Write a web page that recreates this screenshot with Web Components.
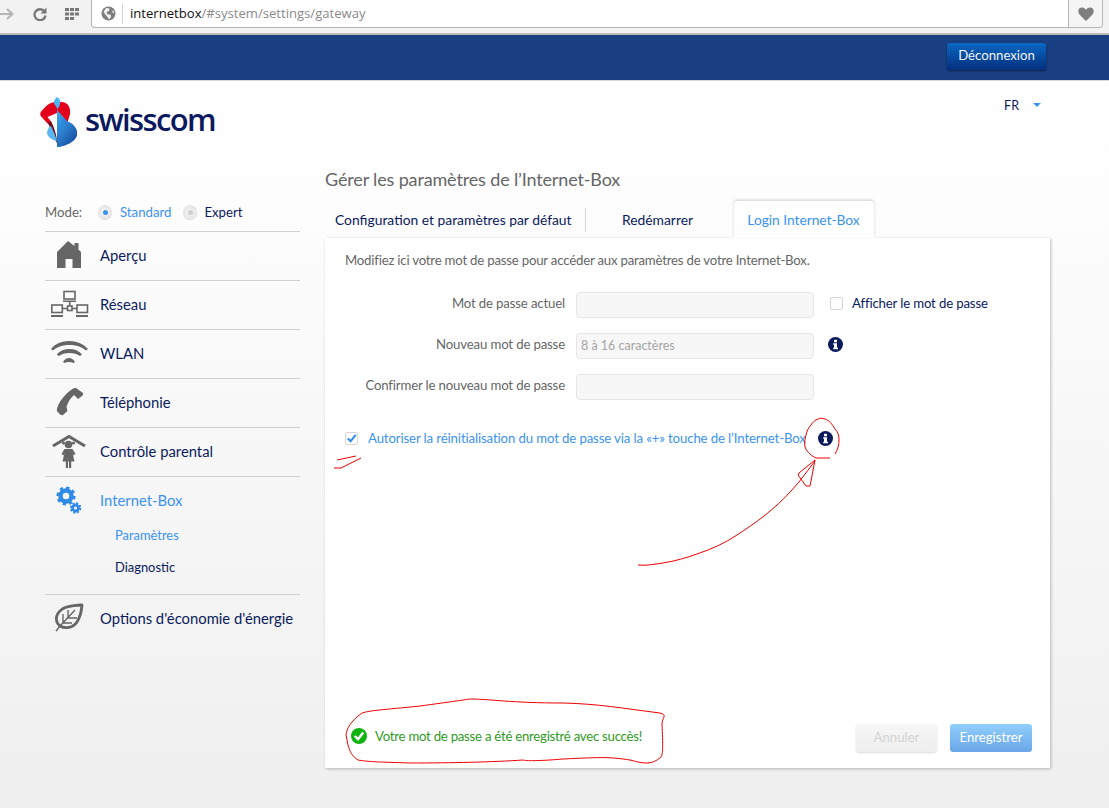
<!DOCTYPE html>
<html lang="fr">
<head>
<meta charset="utf-8">
<title>Internet-Box</title>
<style>
  html, body { margin: 0; padding: 0; }
  body {
    background: linear-gradient(#ffffff 81px, #fdfdfd 200px, #efefef 808px);
    color: #0a1a5c;
    font-family: 'Lato', 'Liberation Sans', sans-serif;
    height: 808px;
    overflow: hidden;
    position: relative;
    width: 1109px;
  }
</style>
</head>
<body>
<browser-bar></browser-bar>
<top-band></top-band>
<site-header></site-header>
<main-layout>
  <side-nav slot="side"></side-nav>
  <settings-panel slot="main"></settings-panel>
</main-layout>
<red-scribbles></red-scribbles>

<script>
const ICONS = {
  home: `<path fill="#666" d="M18 5 L7 16 V32 H15.5 V23 H22.5 V32 H31 V16 L28.5 13.5 V7 H24.5 V10 Z"/>`,
  network: `<g fill="none" stroke="#666" stroke-width="1.6">
      <rect x="14" y="6.5" width="11" height="7.5"/><rect x="1.8" y="20" width="10.5" height="7.5"/><rect x="27" y="20" width="10.5" height="7.5"/>
      <rect x="17.5" y="21" width="4.5" height="4.5"/>
      <path d="M19.7 17 V21 M12.5 23.5 H17.5 M22 23.5 H27"/>
    </g>
    <path fill="#666" d="M13 15.5 H26 V17 H13 Z M1 30 H13 V32 H1 Z M26 30 H38 V32 H26 Z"/>`,
  wifi: `<g fill="#666">
      <path d="M1 15 C9 4.3 29 4.3 38 15 L36 16.5 C28 9.2 11 9.2 3 16.500 Z"/>
      <path d="M6.7 20.5 C13 13.2 26 13.2 32 20.5 L30 22 C25 18 14 18 9 22 Z"/>
      <path d="M13 28 C16 22.7 22 22.700 25 28 L23.500 29 C21 27.700 17 27.700 14.500 29 Z"/>
    </g>`,
  phone: `<path fill="#666" d="M26 5 L33 10 C33.5 11 33 12 32 13 L28 16 L24 12 C21 15 18 18.5 16.5 24 L17.500 28 L13 32 C12 32.5 10.5 32 9.5 31 L7 28 C6.5 26 8 21 12 16 C16 10.5 21 6.5 24 5.2 C24.8 4.9 25.5 4.9 26 5 Z"/>`,
  parental: `<path fill="none" stroke="#666" stroke-width="3" d="M3 14 L19 4.5 L35 14"/>
    <g fill="#666">
      <circle cx="18.5" cy="12.5" r="3.8"/><circle cx="13.5" cy="11" r="1.6"/><circle cx="23.5" cy="11" r="1.6"/>
      <path d="M14.5 17 H22.5 L25.5 22 L23.5 23.5 L22.5 21 L24.5 29.5 H21.2 V36 H19 V29.5 H18 V36 H15.8 V29.5 H12.5 L14.5 21 L13.5 23.5 L11.5 22 Z"/>
    </g>`,
  gears: `<g fill="none" stroke="#2f8ae8">
      <circle cx="16" cy="15" r="5.5" stroke-width="4.5"/>
      <circle cx="16" cy="15" r="8.3" stroke-width="2.6" stroke-dasharray="3.3 3.2"/>
      <circle cx="25.5" cy="27" r="3" stroke-width="2.8"/>
      <circle cx="25.5" cy="27" r="4.8" stroke-width="1.8" stroke-dasharray="2.1 1.67"/>
    </g>`,
  leaf: `<g fill="none" stroke="#666">
      <path stroke-width="2.8" stroke-linejoin="round" d="M32 6 C32 6 17 6 11 11 C5 16 5 23 10 27 C15 30 23 29 27 23 C31 17 32 6 32 6 Z"/>
      <path stroke-width="1.4" d="M6 32 L10 27 L25 11 M13 24 V15 M18 19 V11 M13 24 H22 M18 19 H27"/>
    </g>`
}

class BrowserBar extends HTMLElement {
  constructor () {
    super()
    this.shadow = this.attachShadow({ mode: 'open' })
  }

  connectedCallback () {
    this.shadow.innerHTML = `
    <style>
      :host{
        background: #f2f2f2;
        border-bottom: 2px solid #bcbcbc;
        box-sizing: border-box;
        display: flex;
        height: 35px;
        padding-right: 6px;
      }
      .tools{
        align-items: center;
        display: flex;
        height: 27px;
        width: 91px;
      }
      .tools svg{ flex: none; }
      .omnibox{
        align-items: center;
        background: #fff;
        border: 1px solid #b4b4b4;
        border-top: 0;
        border-radius: 0 0 4px 4px;
        box-sizing: border-box;
        display: flex;
        flex: 1;
        height: 28px;
      }
      .globe{ margin-left: 9px; flex: none; }
      .sep{ background: #d4d4d4; height: 20px; margin: 0 8px 0 6px; width: 1px; }
      .url{ color: #8a8a8a; font: 13.1px/1 'Open Sans', sans-serif; margin-left: -1px; }
      .url b{ color: #111; font-weight: 400; }
      .fill{ flex: 1; }
      .heart{
        align-items: center;
        align-self: stretch;
        background: #f5f5f5;
        border-left: 1px solid #b4b4b4;
        border-radius: 0 0 4px 0;
        display: flex;
        justify-content: center;
        width: 33px;
      }
    </style>
    <div class="tools">
      <svg width="14" height="12" viewBox="0 0 14 12"><path d="M0 6 H12 M7 1 L12.5 6 L7 11" fill="none" stroke="#b5b5b5" stroke-width="2.2"/></svg>
      <svg width="14" height="14" viewBox="0 0 14 14" style="margin-left:19px"><path d="M11.5 4.5 A5.5 5.5 0 1 0 12.5 8.5" fill="none" stroke="#777" stroke-width="2.3"/><path d="M13.5 0.5 V6.5 H7.5 Z" fill="#777"/></svg>
      <svg width="15" height="12" viewBox="0 0 15 12" style="margin-left:18px" fill="#777">
        <rect x="0" y="0" width="4" height="3"/><rect x="5" y="0" width="4" height="3"/><rect x="10" y="0" width="4" height="3"/>
        <rect x="0" y="4.5" width="4" height="3"/><rect x="5" y="4.5" width="4" height="3"/><rect x="10" y="4.5" width="4" height="3"/>
        <rect x="0" y="9" width="4" height="3"/><rect x="5" y="9" width="4" height="3"/>
      </svg>
    </div>
    <div class="omnibox">
      <svg class="globe" width="15" height="15" viewBox="0 0 15 15"><circle cx="7.5" cy="7.5" r="7" fill="#7d7d7d"/><path d="M5 2 L8.5 2.5 L8 5 L5.5 6 L6.5 8.5 L9.5 8.5 L10 11 L8 13.5 L6.5 11 L4 8 L2.5 6 Z M11 4 L13.5 6 L12 7.5 Z" fill="#f2f2f2"/></svg>
      <span class="sep"></span>
      <span class="url"><b>internetbox</b>/#system/settings/gateway</span>
      <span class="fill"></span>
      <span class="heart"><svg width="16" height="14" viewBox="0 0 16 14"><path d="M8 14 L1.5 7.5 C-1 4.5 0.5 0.5 4 0.5 C6 0.5 7.2 1.5 8 3 C8.8 1.5 10 0.5 12 0.5 C15.5 0.5 17 4.5 14.5 7.5 Z" fill="#7f7f7f"/></svg></span>
    </div>
    `
  }
}

class TopBand extends HTMLElement {
  constructor () {
    super()
    this.shadow = this.attachShadow({ mode: 'open' })
  }

  connectedCallback () {
    this.shadow.innerHTML = `
    <style>
      :host{
        align-items: flex-start;
        background: #1a3e82;
        border-bottom: 1px solid #d8d8d8;
        box-sizing: border-box;
        display: flex;
        height: 46px;
        justify-content: flex-end;
        padding: 8px 63px 0 0;
      }
      button{
        all: unset;
        background: linear-gradient(#0a68c4, #042f7e);
        border-radius: 3px;
        box-shadow: 0 1px 2px rgba(0, 0, 0, 0.45);
        box-sizing: border-box;
        color: #f2f5fa;
        font-size: 13.2px;
        height: 27px;
        padding-bottom: 4px;
        text-align: center;
        width: 99px;
      }
    </style>
    <button>Déconnexion</button>
    `
  }
}

class SiteHeader extends HTMLElement {
  constructor () {
    super()
    this.shadow = this.attachShadow({ mode: 'open' })
  }

  connectedCallback () {
    this.shadow.innerHTML = `
    <style>
      :host{
        box-sizing: border-box;
        display: flex;
        height: 84px;
        justify-content: space-between;
        padding: 16px 68px 0 40px;
      }
      .logo{
        align-items: center;
        display: flex;
        gap: 8px;
        height: 50px;
      }
      .name{
        color: #0b1a5e;
        font: 600 31px/1 'Open Sans', sans-serif;
        letter-spacing: -1.65px;
        position: relative;
        top: -3px;
      }
      .lang{
        align-items: center;
        display: flex;
        font-size: 12.5px;
        gap: 14px;
        height: 18px;
        margin-top: -1px;
      }
      .lang i{
        border-left: 4px solid transparent;
        border-right: 4px solid transparent;
        border-top: 4px solid #3b93f0;
        display: block;
      }
    </style>
    <div class="logo">
      <svg width="37" height="50" viewBox="0 0 37 50">
        <defs>
          <linearGradient id="blue" x1="0" y1="0" x2="0.5" y2="1">
            <stop offset="0" stop-color="#5cc0f4"/><stop offset="0.55" stop-color="#2a88da"/><stop offset="1" stop-color="#0a4fa8"/>
          </linearGradient>
          <linearGradient id="deep" x1="0" y1="0" x2="1" y2="1">
            <stop offset="0" stop-color="#3f9fe8"/><stop offset="1" stop-color="#0b3f96"/>
          </linearGradient>
        </defs>
        <path fill="#e3001b" d="M17 5 C10 4.5 6 9 3 12.5 C-0.5 15.5 -0.5 18 2 20.5 L8.5 27.5 L11 24.5 L7.5 20 L17 16 L17 5 Z"/>
        <path fill="#e3001b" d="M17 5 H21 C27 4.5 31 10 30 17 L27.5 25.5 L17 14 Z"/>
        <path fill="#48b4f0" d="M17 0 C14 3 13 6 15 8 L17 11 Z"/>
        <path fill="#6b1220" d="M8 26 L11 24 C14 30 16 36 17 43 L17 46 C13 40 11 32 8 26 Z"/>
        <path fill="#59b8ef" d="M7 35 C8 31 10 29 11 29 C13 33 15 38 17 44 C12 43 7 40 7 35 Z"/>
        <path fill="url(#blue)" d="M17 0 C21 2 21 6 19 10 L17 13 L27 24 C34 27 38 33 37 38 C35 45 26 49 17 50 Z"/>
        <path fill="url(#deep)" d="M17 50 L21 32 C23 29 27 25.5 28 25 C34 27 38 33 37 38 C35 45 26 49 17 50 Z"/>
      </svg>
      <span class="name">swisscom</span>
    </div>
    <div class="lang"><span>FR</span><i></i></div>
    `
  }
}

class MainLayout extends HTMLElement {
  constructor () {
    super()
    this.shadow = this.attachShadow({ mode: 'open' })
  }

  connectedCallback () {
    this.shadow.innerHTML = `
    <style>
      :host{
        display: grid;
        grid-template-columns: 255px 725px;
        column-gap: 25px;
        padding-left: 45px;
      }
    </style>
    <slot name="side"></slot>
    <slot name="main"></slot>
    `
  }
}

class NavItem extends HTMLElement {
  constructor () {
    super()
    this.shadow = this.attachShadow({ mode: 'open' })
  }

  connectedCallback () {
    const icon = ICONS[this.getAttribute('icon')]
    const active = this.hasAttribute('active')
    this.shadow.innerHTML = `
    <style>
      :host{
        border-top: 1px solid #d0d0d0;
        display: block;
      }
      .row{
        align-items: center;
        color: ${active ? '#3b93f0' : '#0a1a5c'};
        display: flex;
        font-size: 14.8px;
        height: 48px;
        padding-left: 5px;
        white-space: nowrap;
      }
      .row span{ margin-bottom: 2px; }
      svg{ flex: none; margin-right: 10px; }
      .sub{ margin-top: -6px; padding: 0 0 11px 70px; }
      ::slotted(a){
        display: block;
        font-size: 12.9px;
        height: 32px;
        line-height: 32px;
      }
    </style>
    <div class="row">
      <svg width="40" height="40" viewBox="0 0 40 40">${icon}</svg>
      <span>${this.getAttribute('label')}</span>
    </div>
    ${this.children.length ? '<div class="sub"><slot></slot></div>' : ''}
    `
  }
}

class SideNav extends HTMLElement {
  constructor () {
    super()
    this.shadow = this.attachShadow({ mode: 'open' })
  }

  connectedCallback () {
    this.shadow.innerHTML = `
    <style>
      :host{
        display: block;
        padding-top: 38px;
      }
      .mode{
        align-items: center;
        display: flex;
        font-size: 13.2px;
        height: 18px;
        padding-bottom: 10px;
      }
      .label{ color: #666; width: 53px; }
      .radio{
        background: radial-gradient(circle at 50% 50%, #f8f8f8, #dcdcdc);
        border-radius: 50%;
        box-shadow: 0 1px 1px rgba(0, 0, 0, 0.15);
        display: block;
        flex: none;
        height: 14px;
        position: relative;
        width: 14px;
      }
      .radio::after{
        background: #cfcfcf;
        border-radius: 50%;
        content: '';
        height: 5px;
        left: 4.5px;
        position: absolute;
        top: 4.5px;
        width: 5px;
      }
      .radio.on::after{ background: #3b93f0; }
      .std{ color: #3b93f0; margin: 0 12px 0 8px; }
      .exp{ margin-left: 7px; }
    </style>
    <div class="mode">
      <span class="label">Mode:</span>
      <span class="radio on"></span><span class="std">Standard</span>
      <span class="radio"></span><span class="exp">Expert</span>
    </div>
    <slot></slot>
    `
    this.innerHTML = `
      <nav-item icon="home" label="Aperçu"></nav-item>
      <nav-item icon="network" label="Réseau"></nav-item>
      <nav-item icon="wifi" label="WLAN"></nav-item>
      <nav-item icon="phone" label="Téléphonie"></nav-item>
      <nav-item icon="parental" label="Contrôle parental"></nav-item>
      <nav-item icon="gears" label="Internet-Box" active>
        <a style="color:#3b93f0">Paramètres</a>
        <a>Diagnostic</a>
      </nav-item>
      <nav-item icon="leaf" label="Options d'économie d'énergie"></nav-item>
    `
  }
}

class InfoBadge extends HTMLElement {
  constructor () {
    super()
    this.shadow = this.attachShadow({ mode: 'open' })
  }

  connectedCallback () {
    this.shadow.innerHTML = `
    <style>
      :host{ display: inline-flex; flex: none; }
    </style>
    <svg width="15" height="15" viewBox="0 0 15 15">
      <circle cx="7.5" cy="7.5" r="7.5" fill="#0a1a5c"/>
      <rect x="6" y="2.8" width="3" height="2.5" fill="#fff"/>
      <path d="M5.2 6.3 H9 V10.7 H10 V12.2 H5.2 V10.7 H6 V7.8 H5.2 Z" fill="#fff"/>
    </svg>
    `
  }
}

class CheckBox extends HTMLElement {
  constructor () {
    super()
    this.shadow = this.attachShadow({ mode: 'open' })
  }

  connectedCallback () {
    const mark = this.hasAttribute('checked')
      ? '<svg width="12" height="11" viewBox="0 0 12 11"><path d="M2 5.5 L5 8.5 L10.5 1.5" fill="none" stroke="#2f8ae8" stroke-width="2.2"/></svg>'
      : ''
    this.shadow.innerHTML = `
    <style>
      :host{
        align-items: center;
        background: #fdfdfd;
        border: 1px solid #d6d6d6;
        border-radius: 2px;
        box-sizing: border-box;
        display: inline-flex;
        flex: none;
        height: 13px;
        justify-content: center;
        width: 13px;
      }
    </style>
    ${mark}
    `
  }
}

class FormRow extends HTMLElement {
  constructor () {
    super()
    this.shadow = this.attachShadow({ mode: 'open' })
  }

  connectedCallback () {
    const hint = this.getAttribute('hint') || ''
    this.shadow.innerHTML = `
    <style>
      :host{
        align-items: center;
        display: flex;
        height: 26px;
      }
      label{
        color: #666;
        font-size: 13.2px;
        letter-spacing: -0.15px;
        padding-bottom: 5px;
        text-align: right;
        width: 220px;
      }
      .field{
        background: #f7f7f7;
        border: 1px solid #e6e6e6;
        border-radius: 4px;
        box-sizing: border-box;
        color: #a5a5a5;
        font-size: 12.5px;
        height: 26px;
        line-height: 24px;
        margin: 0 14px 0 11px;
        padding-left: 4px;
        width: 238px;
      }
      .after{
        align-items: center;
        display: flex;
        font-size: 13.2px;
        gap: 9px;
        letter-spacing: -0.15px;
        padding-bottom: 4px;
      }
      ::slotted(check-box){ margin-left: 2px; }
    </style>
    <label>${this.getAttribute('label')}</label>
    <div class="field">${hint}</div>
    <div class="after"><slot></slot></div>
    `
  }
}

class SettingsPanel extends HTMLElement {
  constructor () {
    super()
    this.shadow = this.attachShadow({ mode: 'open' })
  }

  connectedCallback () {
    this.shadow.innerHTML = `
    <style>
      :host{
        display: block;
        padding-top: 3px;
      }
      h1{
        color: #666;
        font-size: 18px;
        font-weight: 400;
        letter-spacing: -0.15px;
        line-height: 22px;
        margin: 0 0 11px;
      }
      .tabs{
        align-items: center;
        display: flex;
        font-size: 13.85px;
        height: 37px;
      }
      .tab{ text-align: center; }
      .tab.first{ border-right: 1px solid #d8d8d8; line-height: 24px; padding: 0 13px 0 10px; }
      .tab.second{ box-sizing: border-box; padding-right: 4px; width: 148px; }
      .tab.active{
        background: #fff;
        border-radius: 3px 3px 0 0;
        box-shadow: 0 -1px 3px rgba(0, 0, 0, 0.18);
        color: #3b93f0;
        letter-spacing: -0.05px;
        line-height: 37px;
        position: relative;
        width: 140px;
        z-index: 1;
      }
      .panel{
        background: #fff;
        box-shadow: 1px 1px 3px rgba(0, 0, 0, 0.25);
        box-sizing: border-box;
        display: flex;
        flex-direction: column;
        height: 530px;
        padding: 14px 18px 16px 20px;
      }
      .intro{
        color: #666;
        font-size: 13.2px;
        letter-spacing: -0.2px;
        line-height: 17px;
        margin-bottom: 23px;
      }
      .rows{
        display: flex;
        flex-direction: column;
        gap: 15px;
      }
      .reset{
        align-items: center;
        color: #3b93f0;
        display: flex;
        font-size: 13.2px;
        letter-spacing: -0.12px;
        margin-top: 30px;
      }
      .reset span{ margin: 0 12px 0 10px; }
      .footer{
        align-items: center;
        display: flex;
        margin-top: auto;
      }
      .ok{
        align-items: center;
        color: #2f9a1e;
        display: flex;
        flex: 1;
        font-size: 13.2px;
        gap: 8px;
        letter-spacing: -0.25px;
        margin-left: 6px;
        padding-bottom: 5px;
      }
      button{
        all: unset;
        border-radius: 3px;
        box-sizing: border-box;
        font-size: 13.2px;
        height: 28px;
        padding-bottom: 2px;
        text-align: center;
      }
      .cancel{
        background: linear-gradient(#f6f6f6, #eeeeee);
        box-shadow: 0 1px 2px rgba(0, 0, 0, 0.15);
        color: #d4d4d4;
        margin-right: 13px;
        width: 81px;
      }
      .save{
        background: linear-gradient(#90cffc, #6aa6e8);
        color: #fff;
        width: 82px;
      }
    </style>
    <h1>Gérer les paramètres de l’Internet-Box</h1>
    <div class="tabs">
      <div class="tab first">Configuration et paramètres par défaut</div>
      <div class="tab second">Redémarrer</div>
      <div class="tab active">Login Internet-Box</div>
    </div>
    <div class="panel">
      <div class="intro">Modifiez ici votre mot de passe pour accéder aux paramètres de votre Internet-Box.</div>
      <div class="rows">
        <form-row label="Mot de passe actuel"><check-box></check-box><span>Afficher le mot de passe</span></form-row>
        <form-row label="Nouveau mot de passe" hint="8 à 16 caractères"><info-badge></info-badge></form-row>
        <form-row label="Confirmer le nouveau mot de passe"></form-row>
      </div>
      <div class="reset">
        <check-box checked></check-box>
        <span>Autoriser la réinitialisation du mot de passe via la «+» touche de l’Internet-Box</span>
        <info-badge></info-badge>
      </div>
      <div class="footer">
        <div class="ok">
          <svg width="16" height="16" viewBox="0 0 16 16"><circle cx="8" cy="8" r="8" fill="#12b312"/><path d="M3.8 8 L7 11.2 L12.2 4.5" fill="none" stroke="#fff" stroke-width="2.4"/></svg>
          <span>Votre mot de passe a été enregistré avec succès!</span>
        </div>
        <button class="cancel">Annuler</button>
        <button class="save">Enregistrer</button>
      </div>
    </div>
    `
  }
}

class RedScribbles extends HTMLElement {
  constructor () {
    super()
    this.shadow = this.attachShadow({ mode: 'open' })
  }

  connectedCallback () {
    // marks someone drew over the screenshot, so they sit on top of everything
    this.shadow.innerHTML = `
    <style>
      :host{
        display: block;
        height: 808px;
        left: 0;
        pointer-events: none;
        position: absolute;
        top: 0;
        width: 1109px;
      }
      path{ fill: none; stroke: #ee0000; stroke-width: 1; }
    </style>
    <svg width="1109" height="808" viewBox="0 0 1109 808">
      <path d="M835 454 C838 449 839 445 839 440 C839 435 838 432 835 429 C832 424 829 420 825 419 C822 418 820 418 818 419 C815 420 813 422 811 425 C808 428 807 431 806 435 C805 439 804 443 805 447 C806 450 808 452 810 454 C812 456 814 457 816 458 L830 458"/>
      <path d="M638 565 C646 566 655 564 663 563 C675 561 686 558 697 554 C712 549 725 543 737 535 C746 529 755 523 764 516 C774 508 783 500 791 491 L799 482 L815 461"/>
      <path d="M815 460 L799 473 L798 475 L806 486 L810 486 Z"/>
      <path d="M337 460 L356 456 M361 458 L341 468 L334 468"/>
      <path d="M346 735 C347 728 350 722 362 713 C372 710 382 710 420 706 C450 702 470 699 470 699 C490 699 510 703 563 703 C600 704 620 708 660 713 C668 715 662 718 662 724 C663 745 663 755 661 757 C652 765 645 764 630 760 C610 757 605 757 563 759 C540 761 525 761 523 760 C495 762 450 763 410 763 C380 762 370 762 358 760 C352 756 350 752 348 745 Z"/>
    </svg>
    `
  }
}

customElements.define('browser-bar', BrowserBar)
customElements.define('top-band', TopBand)
customElements.define('site-header', SiteHeader)
customElements.define('main-layout', MainLayout)
customElements.define('nav-item', NavItem)
customElements.define('side-nav', SideNav)
customElements.define('info-badge', InfoBadge)
customElements.define('check-box', CheckBox)
customElements.define('form-row', FormRow)
customElements.define('settings-panel', SettingsPanel)
customElements.define('red-scribbles', RedScribbles)
</script>
</body>
</html>
